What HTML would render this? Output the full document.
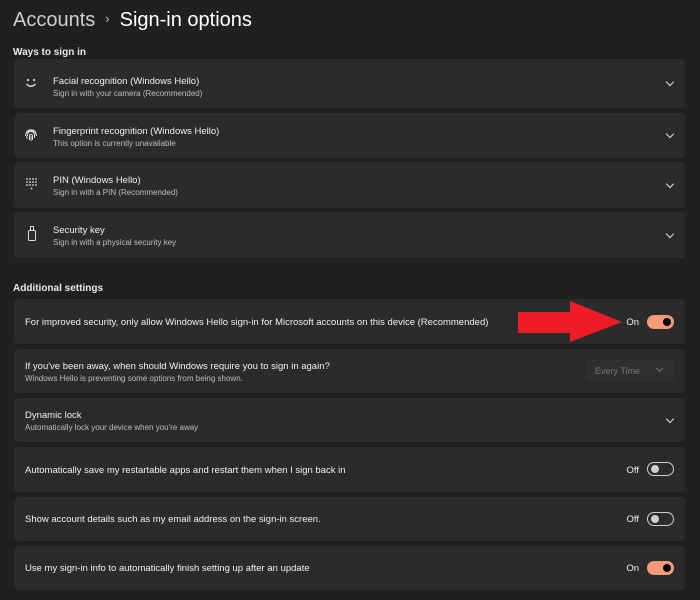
<!DOCTYPE html>
<html><head><style>
*{margin:0;padding:0;box-sizing:border-box}
body{width:700px;height:600px;background:#202020;font-family:"Liberation Sans",sans-serif;color:#fff;position:relative;overflow:hidden}
.h{position:absolute;top:9px;left:13px;font-size:20px;white-space:nowrap}
.h .a{color:#cfcfcf}.h .s{color:#bbb;font-size:13px;margin:0 10px;position:relative;top:-3px}
.sec{position:absolute;left:13px;font-size:10px;font-weight:bold;color:#e8e8e8}
.c{position:absolute;left:14px;width:671px;background:#2b2b2b;border-radius:4px}
.t{position:absolute;left:39px;font-size:9.5px;color:#f0f0f0;white-space:nowrap}
.t2{left:11px}
.sub{display:block;font-size:8px;color:#bdbdbd;margin-top:2px}
.ic{position:absolute;left:9px}
.chev{position:absolute;right:12px;width:6px;height:6px;border-right:1.3px solid #ddd;border-bottom:1.3px solid #ddd;transform:rotate(45deg)}
.tg{position:absolute;right:11px;width:27px;height:14px;border-radius:7px}
.on{background:#f4997a}.on::after{content:"";position:absolute;right:3px;top:3px;width:8px;height:8px;border-radius:50%;background:#000}
.off{border:1px solid #cfcfcf}.off::after{content:"";position:absolute;left:3px;top:2px;width:8px;height:8px;border-radius:50%;background:#cfcfcf}
.lbl{position:absolute;right:46px;font-size:9.5px;color:#eee}
</style></head><body>
<div class="h"><span class="a">Accounts</span><span class="s">›</span><span>Sign-in options</span></div>
<div class="sec" style="top:47px">Ways to sign in</div>
<div class="c" style="top:59px;height:49px">
<svg class="ic" style="top:17px" width="16" height="14" viewBox="0 0 16 14"><circle cx="5" cy="4" r="1.1" fill="#ddd"/><circle cx="11" cy="4" r="1.1" fill="#ddd"/><path d="M3.5 8 Q8 12.5 12.5 8" stroke="#ddd" stroke-width="1.4" fill="none"/></svg>
<div class="t" style="top:17px">Facial recognition (Windows Hello)<span class="sub">Sign in with your camera (Recommended)</span></div><div class="chev" style="top:20px"></div></div>
<div class="c" style="top:113px;height:45px">
<svg class="ic" style="top:14px" width="16" height="16" viewBox="0 0 16 16" fill="none" stroke="#ddd" stroke-width="1"><path d="M3 6 A5.5 5.5 0 0 1 13 6"/><path d="M2.5 9 A5.5 5.5 0 0 1 8 3.5 A5.5 5.5 0 0 1 13.5 9"/><path d="M4.5 12 A3.5 3.5 0 0 1 4.5 8 A3.5 3.5 0 0 1 11.5 8 V11"/><path d="M6.5 13 V9 A1.5 1.5 0 0 1 9.5 9 V13"/><path d="M8 9 V14"/></svg>
<div class="t" style="top:13px">Fingerprint recognition (Windows Hello)<span class="sub">This option is currently unavailable</span></div><div class="chev" style="top:18px"></div></div>
<div class="c" style="top:162px;height:46px">
<svg class="ic" style="top:15px" width="16" height="16" viewBox="0 0 16 16" fill="#ddd"><circle cx="4" cy="2" r="0.9"/><circle cx="7" cy="2" r="0.9"/><circle cx="10" cy="2" r="0.9"/><circle cx="13" cy="2" r="0.9"/><circle cx="4" cy="5" r="0.9"/><circle cx="7" cy="5" r="0.9"/><circle cx="10" cy="5" r="0.9"/><circle cx="13" cy="5" r="0.9"/><circle cx="4" cy="8" r="0.9"/><circle cx="7" cy="8" r="0.9"/><circle cx="10" cy="8" r="0.9"/><circle cx="13" cy="8" r="0.9"/><circle cx="8.5" cy="11.5" r="0.9"/></svg>
<div class="t" style="top:13px">PIN (Windows Hello)<span class="sub">Sign in with a PIN (Recommended)</span></div><div class="chev" style="top:19px"></div></div>
<div class="c" style="top:212px;height:46px"><div style="position:absolute;left:14px;top:18px;width:8px;height:11px;border:1.2px solid #ddd;border-radius:1.5px"></div><div style="position:absolute;left:16px;top:14px;width:4px;height:5px;border:1px solid #ddd;border-bottom:none"></div><div class="t" style="top:13px">Security key<span class="sub">Sign in with a physical security key</span></div><div class="chev" style="top:19px"></div></div>
<div class="sec" style="top:283px">Additional settings</div>
<div class="c" style="top:299px;height:45px"><div class="t t2" style="top:18px">For improved security, only allow Windows Hello sign-in for Microsoft accounts on this device (Recommended)</div><div class="lbl" style="top:18px">On</div><div class="tg on" style="top:16px"></div></div>
<div class="c" style="top:349px;height:44px"><div class="t t2" style="top:12px">If you've been away, when should Windows require you to sign in again?<span class="sub">Windows Hello is preventing some options from being shown.</span></div><div style="position:absolute;left:573px;top:11px;width:87px;height:21px;background:#2f2f2f;border:1px solid #333;border-radius:3px;font-size:9px;color:#777;padding:5px 7px">Every Time<span style="position:absolute;right:11px;top:5px;width:5px;height:5px;border-right:1px solid #777;border-bottom:1px solid #777;transform:rotate(45deg)"></span></div></div>
<div class="c" style="top:398px;height:44px"><div class="t t2" style="top:12px">Dynamic lock<span class="sub">Automatically lock your device when you're away</span></div><div class="chev" style="top:18px"></div></div>
<div class="c" style="top:447px;height:45px"><div class="t t2" style="top:18px">Automatically save my restartable apps and restart them when I sign back in</div><div class="lbl" style="top:18px">Off</div><div class="tg off" style="top:15px"></div></div>
<div class="c" style="top:497px;height:44px"><div class="t t2" style="top:17px">Show account details such as my email address on the sign-in screen.</div><div class="lbl" style="top:17px">Off</div><div class="tg off" style="top:15px"></div></div>
<div class="c" style="top:546px;height:44px"><div class="t t2" style="top:17px">Use my sign-in info to automatically finish setting up after an update</div><div class="lbl" style="top:17px">On</div><div class="tg on" style="top:15px"></div></div>
<svg style="position:absolute;left:0;top:0" width="700" height="600"><polygon points="518,312 570,312 570,301 622,322 570,342 570,333 518,333" fill="#ee1c25"/></svg>
</body></html>
